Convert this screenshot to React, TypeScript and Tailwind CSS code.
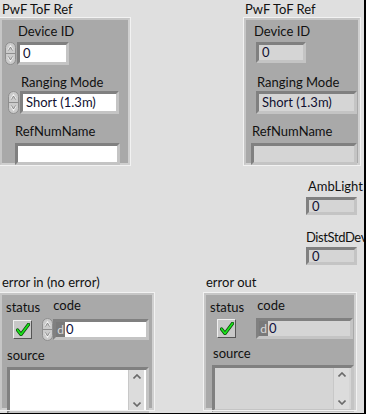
import React from 'react';

const font = { fontFamily: 'Lato, "Noto Sans", sans-serif' };

function Incrementer({ className = '' }: { className?: string }) {
  return (
    <svg width="11" height="23" viewBox="0 0 11 23" className={className}>
      <rect x="0.5" y="0.5" width="10" height="22" rx="5" fill="#cbcbcb" stroke="#8e8e8e" />
      <line x1="1" y1="11.5" x2="10" y2="11.5" stroke="#8e8e8e" />
      <path d="M3 8 L5.5 4 L8 8" fill="none" stroke="#f4f4f4" strokeWidth="1.2" />
      <path d="M3 15 L5.5 19 L8 15" fill="none" stroke="#f4f4f4" strokeWidth="1.2" />
      <path d="M3.5 8.5 L5.5 5 L7.5 8.5" fill="none" stroke="#7a7a7a" strokeWidth="0.8" />
      <path d="M3.5 14.5 L5.5 18 L7.5 14.5" fill="none" stroke="#7a7a7a" strokeWidth="0.8" />
    </svg>
  );
}

function Field({
  value = '',
  indicator = false,
  className = '',
}: {
  value?: string;
  indicator?: boolean;
  className?: string;
}) {
  return (
    <div
      className={`flex items-center border-[3px] border-t-[#808080] border-l-[#808080] border-r-[#c4c4c4] border-b-[#c4c4c4] ${
        indicator ? 'bg-[#d5d5d5]' : 'bg-white'
      } ${className}`}
    >
      <span className="pl-[3px] text-[13px] leading-none text-[#101030]">{value}</span>
    </div>
  );
}

function Cluster({ className = '', children }: { className?: string; children: React.ReactNode }) {
  return (
    <div
      className={`border-2 border-t-[#c6c6c6] border-l-[#c6c6c6] border-r-[#d0d0d0] border-b-[#d0d0d0] bg-[#a9a9a9] outline outline-1 outline-[#f2f2f2] ${className}`}
    >
      {children}
    </div>
  );
}

function Label({ text, className = '' }: { text: string; className?: string }) {
  return <div className={`text-[13px] leading-[16px] text-[#111] whitespace-nowrap ${className}`}>{text}</div>;
}

function CheckButton() {
  return (
    <div className="w-[19px] h-[19px] bg-[#c8c8c8] border border-t-[#f0f0f0] border-l-[#f0f0f0] border-r-[#555] border-b-[#555] flex items-center justify-center">
      <svg width="14" height="13" viewBox="0 0 14 13">
        <path d="M1.5 7 L5 11.5 L12.5 1.5" fill="none" stroke="#0b4d0b" strokeWidth="3.4" strokeLinecap="round" strokeLinejoin="round" />
        <path d="M1.5 7 L5 11.5 L12.5 1.5" fill="none" stroke="#1be41b" strokeWidth="1.8" strokeLinecap="round" strokeLinejoin="round" />
      </svg>
    </div>
  );
}

function CodeField({ className = '', indicator = false }: { className?: string; indicator?: boolean }) {
  return (
    <div
      className={`flex border-[3px] border-t-[#808080] border-l-[#808080] border-r-[#c4c4c4] border-b-[#c4c4c4] ${
        indicator ? 'bg-[#d5d5d5]' : 'bg-white'
      } ${className}`}
    >
      <div className="w-[9px] bg-[#7a7a7a] flex items-center justify-center text-[12px] leading-none text-[#d8d8d8]">d</div>
      <span className="pl-[1px] text-[13px] leading-none self-center text-[#101040]">0</span>
    </div>
  );
}

function SourceBox({ indicator = false, className = '' }: { indicator?: boolean; className?: string }) {
  return (
    <div
      className={`flex border-[3px] border-t-[#808080] border-l-[#808080] border-r-[#c4c4c4] border-b-[#c4c4c4] ${
        indicator ? 'bg-[#d5d5d5]' : 'bg-white'
      } ${className}`}
    >
      <div className="flex-1" />
      <div className="w-[16px] mr-[2px] bg-[#dcdcdc] border-l border-[#c8c8c8] flex flex-col items-center justify-between py-[4px]">
        <svg width="8" height="5" viewBox="0 0 8 5">
          <path d="M0.5 4.5 L4 1 L7.5 4.5" fill="none" stroke="#6a6a6a" strokeWidth="1.6" />
        </svg>
        <svg width="8" height="5" viewBox="0 0 8 5">
          <path d="M0.5 0.5 L4 4 L7.5 0.5" fill="none" stroke="#6a6a6a" strokeWidth="1.6" />
        </svg>
      </div>
    </div>
  );
}

export default function App() {
  return (
    <div
      style={font}
      className="w-[366px] h-[414px] bg-[#dfdfdf] border-r-2 border-b border-r-black border-b-black overflow-hidden"
    >
      {/* top row: control and indicator clusters */}
      <div className="flex">
        <div className="w-[130px]">
          <Label text="PwF ToF Ref" className="pl-[2px] pt-[1px]" />
          <Cluster className="mt-[1px] w-[130px] h-[147px] pl-[2px]">
            <Label text="Device ID" className="ml-[14px] mt-[3px]" />
            <div className="flex items-center mt-[3px]">
              <Incrementer className="ml-[1px]" />
              <Field value="0" className="ml-[1px] w-[52px] h-[23px]" />
            </div>
            <Label text="Ranging Mode" className="ml-[17px] mt-[9px]" />
            <div className="flex items-center mt-[1px]">
              <Incrementer className="ml-[4px]" />
              <Field value="Short (1.3m)" className="ml-[1px] w-[99px] h-[23px]" />
            </div>
            <Label text="RefNumName" className="ml-[11px] mt-[9px]" />
            <Field className="ml-[11px] mt-[4px] w-[105px] h-[22px]" />
          </Cluster>
        </div>
        <div className="ml-[114px] w-[116px]">
          <Label text="PwF ToF Ref" className="pl-[1px] pt-[1px]" />
          <Cluster className="mt-[1px] w-[116px] h-[147px] pl-[2px]">
            <Label text="Device ID" className="ml-[6px] mt-[3px]" />
            <Field value="0" indicator className="ml-[8px] mt-[3px] w-[50px] h-[21px]" />
            <Label text="Ranging Mode" className="ml-[9px] mt-[11px]" />
            <Field value="Short (1.3m)" indicator className="ml-[8px] mt-[1px] w-[101px] h-[23px]" />
            <Label text="RefNumName" className="ml-[4px] mt-[9px]" />
            <Field indicator className="ml-[3px] mt-[4px] w-[106px] h-[22px]" />
          </Cluster>
        </div>
      </div>

      {/* standalone indicators */}
      <div className="ml-[306px] mt-[13px]">
        <Label text="AmbLight" className="ml-[2px]" />
        <Field value="0" indicator className="mt-[3px] w-[51px] h-[18px]" />
        <Label text="DistStdDev" className="mt-[14px] tracking-[-0.4px]" />
        <Field value="0" indicator className="mt-[2px] w-[51px] h-[18px]" />
      </div>

      {/* error clusters */}
      <div className="flex mt-[9px]">
        <div className="w-[154px]">
          <Label text="error in (no error)" className="pl-[2px]" />
          <Cluster className="mt-[3px] w-[154px] h-[117px]">
            <div className="flex mt-[4px]">
              <Label text="status" className="ml-[4px]" />
              <Label text="code" className="ml-[13px] -mt-[2px]" />
            </div>
            <div className="flex items-center mt-[3px]">
              <div className="ml-[11px]"><CheckButton /></div>
              <Incrementer className="ml-[10px]" />
              <CodeField className="w-[96px] h-[21px]" />
            </div>
            <Label text="source" className="ml-[5px] mt-[6px]" />
            <SourceBox className="ml-[5px] mt-[4px] w-[142px] h-[47px]" />
          </Cluster>
        </div>
        <div className="ml-[50px] w-[152px]">
          <Label text="error out" className="pl-[2px]" />
          <Cluster className="mt-[3px] w-[152px] h-[117px]">
            <div className="flex mt-[4px]">
              <Label text="status" className="ml-[4px]" />
              <Label text="code" className="ml-[13px] -mt-[2px]" />
            </div>
            <div className="flex items-center mt-[3px]">
              <div className="ml-[11px]"><CheckButton /></div>
              <CodeField indicator className="ml-[20px] w-[97px] h-[21px]" />
            </div>
            <Label text="source" className="ml-[7px] mt-[6px]" />
            <SourceBox indicator className="ml-[6px] mt-[4px] w-[142px] h-[47px]" />
          </Cluster>
        </div>
      </div>
    </div>
  );
}
